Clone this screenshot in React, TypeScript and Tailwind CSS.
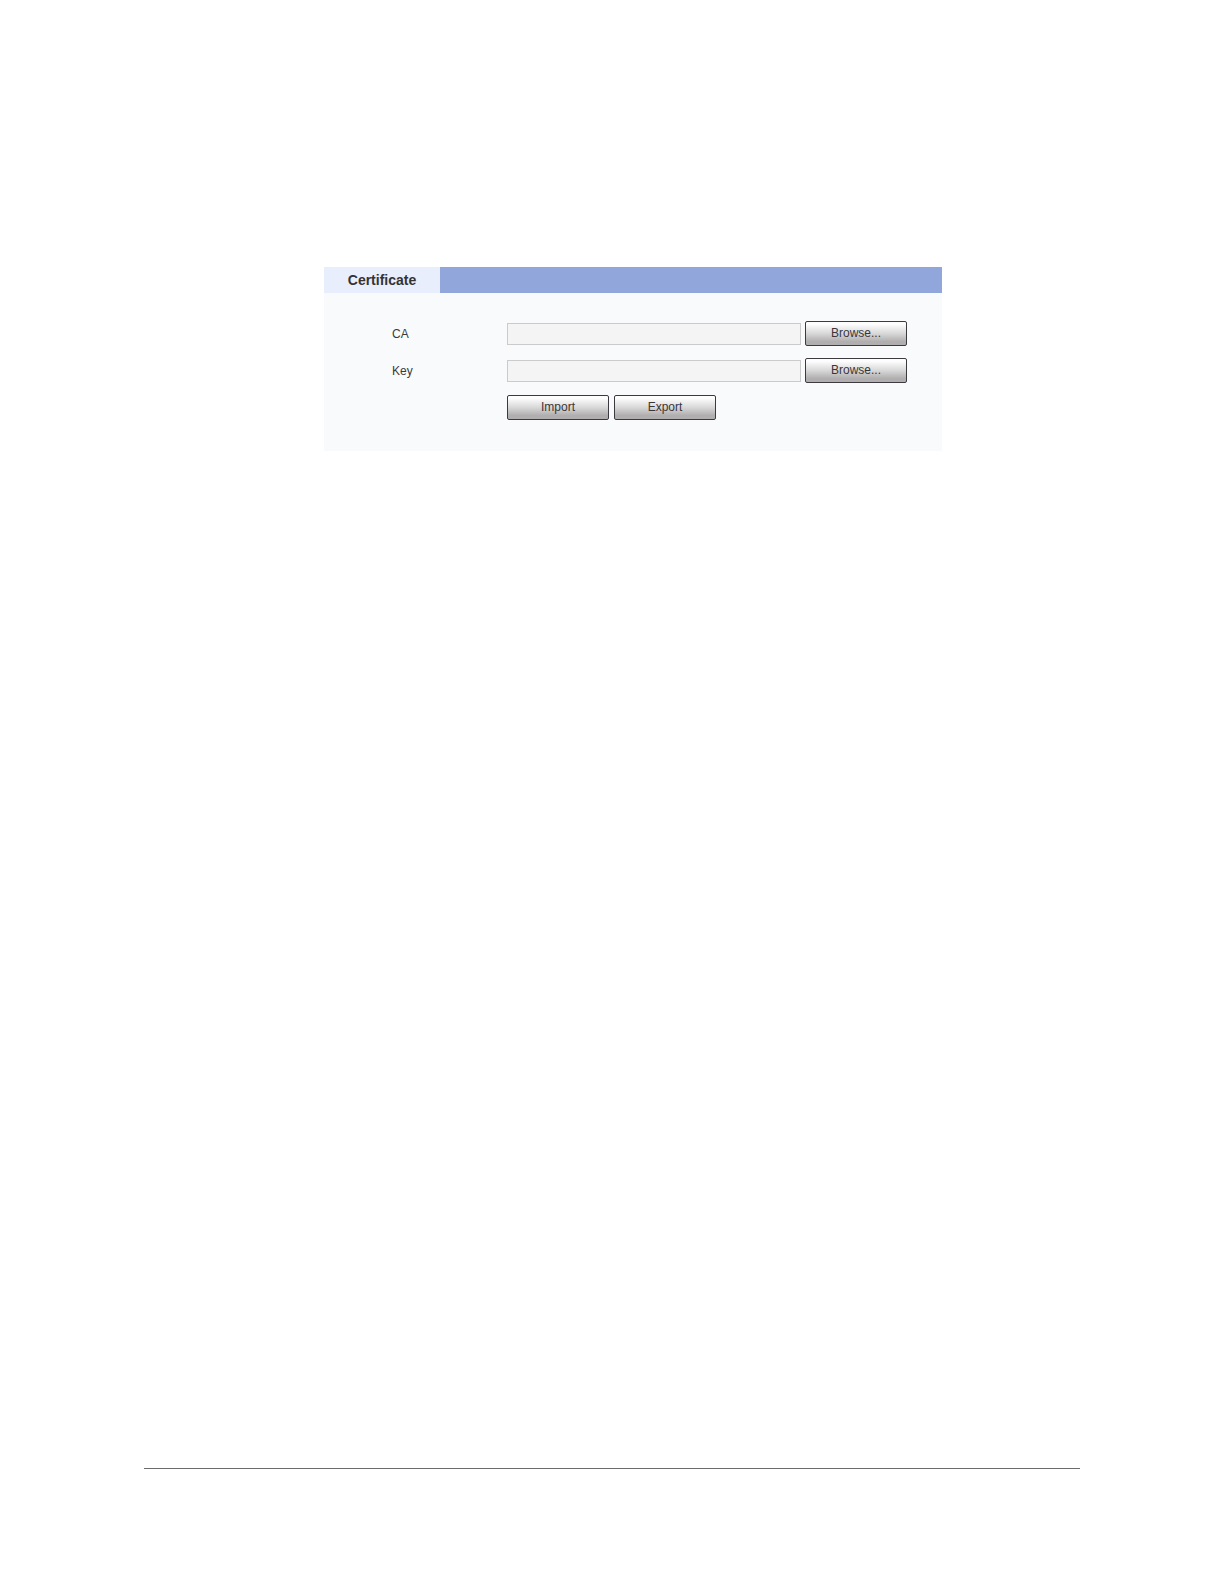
import type { ReactNode } from "react";

function PanelButton({ children, label }: { children: ReactNode; label?: string }) {
  return (
    <button
      type="button"
      aria-label={label}
      className="flex h-[25px] w-[102px] shrink-0 items-center justify-center rounded-[2px] border border-[#3c3a3e] bg-linear-to-b from-[#fdfdfd] from-10% via-[#d9d8d9] via-50% to-[#b0aeaf] to-85% pb-0.5 text-[12px] leading-4 text-[#3a3638]"
    >
      {children}
    </button>
  );
}

function FileRow({ id, label }: { id: string; label: string }) {
  return (
    <div className="flex items-center">
      <label htmlFor={id} className="w-[115px] shrink-0">
        {label}
      </label>
      <input
        id={id}
        type="text"
        readOnly
        className="mr-1 h-[22px] min-w-0 flex-1 border border-[#cbcbcc] bg-[#f4f4f4] px-1 outline-none"
      />
      <PanelButton label={`Browse... ${label}`}>Browse...</PanelButton>
    </div>
  );
}

export default function App() {
  return (
    <div className="flex min-h-screen flex-col bg-white px-36 pt-[267px] font-['Liberation_Sans',Arial,sans-serif]">
      <main className="mr-[138px] ml-[180px] bg-[#f9fafc]">
        <div className="flex h-[26px] bg-[#91a6db]">
          <h1 className="flex w-[116px] items-center justify-center bg-[#e8eefb] text-[14px] leading-4 font-bold text-[#333336]">
            Certificate
          </h1>
        </div>
        <form className="flex flex-col gap-3 pt-7 pr-[35px] pb-[31px] pl-[68px] text-[12px] leading-4 text-[#3a3a3c]">
          <FileRow id="ca" label="CA" />
          <FileRow id="key" label="Key" />
          <div className="flex gap-[5px] pl-[115px]">
            <PanelButton>Import</PanelButton>
            <PanelButton>Export</PanelButton>
          </div>
        </form>
      </main>
      <hr className="mt-auto mb-[115px] border-t border-[#6b6b6b]" />
    </div>
  );
}
